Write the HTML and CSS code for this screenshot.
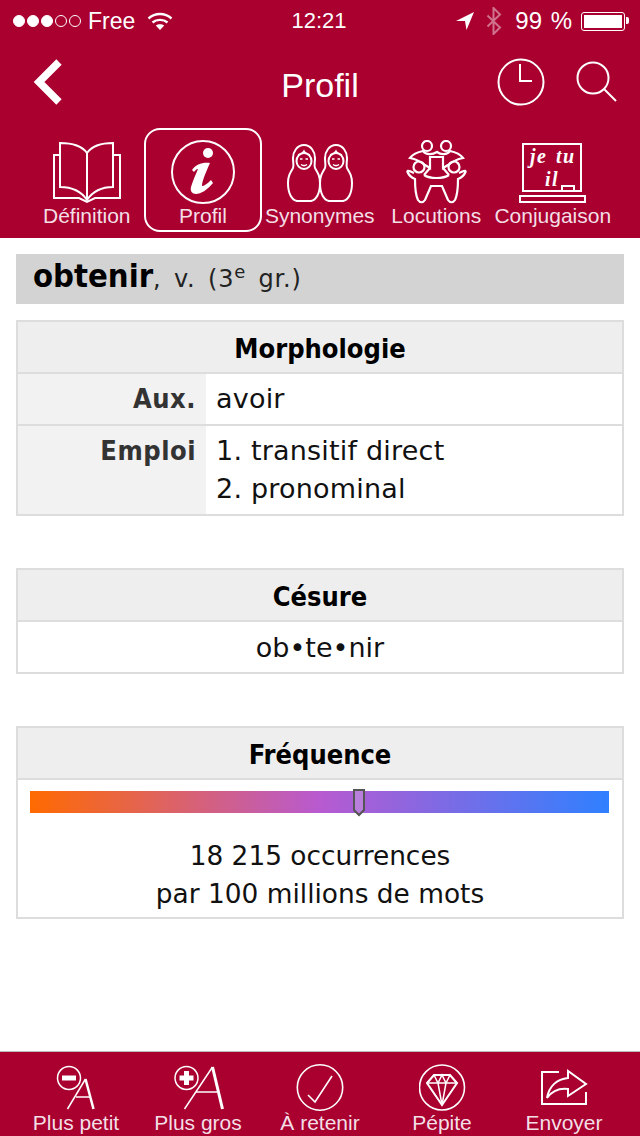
FILE: index.html
```html
<!DOCTYPE html>
<html lang="fr">
<head>
    <meta charset="UTF-8">
    <meta name="viewport" content="width=device-width, initial-scale=1.0">
    <title>Profil</title>
    <link rel="stylesheet" href="styles.css">
</head>
<body>

    <div class="app">
        <header class="app-header">
            <div class="status-bar">
                <div class="status-left">
                    <span class="signal"><i class="on"></i><i class="on"></i><i class="on"></i><i></i><i></i></span>
                    <span class="carrier">Free</span>
                    <svg class="wifi" width="26" height="20" viewBox="0 0 26 20">
                        <path d="M1.500 7.500C8 1.500 18 1.500 24.500 7.500" fill="none" stroke="#fff" stroke-width="2.400"/>
                        <path d="M5.500 11.500C9.500 8 16.500 8 20.500 11.500" fill="none" stroke="#fff" stroke-width="2.400"/>
                        <path d="M13 19L8.800 14.500C11 12.800 15 12.800 17.200 14.500Z" fill="#fff"/>
                    </svg>
                </div>
                <div class="status-time">12:21</div>
                <div class="status-right">
                    <svg width="18" height="18" viewBox="0 0 18 18"><path d="M0 9L18 0L10.500 18L9 9Z" fill="#fff"/></svg>
                    <svg class="bluetooth" width="16" height="28" viewBox="0 0 16 28"><path d="M1.500 8.500L14 20.500L7.500 27V1L14 7.500L1.500 19.500" fill="none" stroke="#fff" stroke-width="2"/></svg>
                    <span class="battery-text">99 %</span>
                    <span class="battery"><span class="battery-fill"></span></span>
                </div>
            </div>

            <div class="nav-bar">
                <svg class="back" width="32" height="48" viewBox="0 0 32 48"><path d="M28 4L8 24L28 44" fill="none" stroke="#fff" stroke-width="7.500"/></svg>
                <h1>Profil</h1>
                <div class="nav-icons">
                    <svg width="48" height="48" viewBox="0 0 48 48" fill="none" stroke="#fff" stroke-width="2"><circle cx="24" cy="24" r="22.500"/><path d="M23 6V23H35"/></svg>
                    <svg width="42" height="42" viewBox="0 0 42 42" fill="none" stroke="#fff" stroke-width="2"><circle cx="17" cy="17" r="15.500"/><path d="M28 28L40 40"/></svg>
                </div>
            </div>

            <nav class="tabs">
                <a class="tab">
                    <svg width="68" height="64" viewBox="0 0 68 64" fill="none" stroke="#fff" stroke-width="2"><path d="M34 13C29 6 19 3 7 3V47C18 47 28 51 34 60C40 51 50 47 60 47V3C49 3 39 6 34 13Z"/><path d="M34 13V60"/><path d="M7 15H1V58H26L34 62L42 58H67V15H60"/></svg>
                    <span>Définition</span>
                </a>
                <a class="tab active">
                    <svg width="64" height="64" viewBox="0 0 64 64"><circle cx="32" cy="32" r="31" fill="none" stroke="#fff" stroke-width="2"/><circle cx="37" cy="13" r="5" fill="#fff"/><path d="M21 30C25 24 32 22 39 23C35 32 31 41 31 46C33 46 36 44 40 40L42 43C36 50 30 54 25 54C21 54 19 51 20 47C22 40 25 34 27 29C25 29 24 31 23 32Z" fill="#fff"/></svg>
                    <span>Profil</span>
                </a>
                <a class="tab">
                    <svg width="66" height="64" viewBox="0 0 66 64" fill="none" stroke="#fff" stroke-width="2">
                        <g transform="translate(0 4)">
                            <path d="M17 1C24 1 28 8 28 14C28 19 27 21 28 24C31 29 33 32 33 39C33 50 29 56 24 57H10C5 56 1 50 1 39C1 32 3 29 6 24C7 21 6 19 6 14C6 8 10 1 17 1Z"/>
                            <ellipse cx="17" cy="17" rx="7.500" ry="8"/>
                            <path d="M13 15H15.500M18.500 15H21M14 20.500C16 22 18 22 20 20.500M11 11C14 10 16 9 17 7C18 9 20 10 23 11" stroke-width="1.500"/>
                        </g>
                        <g transform="translate(32 4)">
                            <path d="M17 1C24 1 28 8 28 14C28 19 27 21 28 24C31 29 33 32 33 39C33 50 29 56 24 57H10C5 56 1 50 1 39C1 32 3 29 6 24C7 21 6 19 6 14C6 8 10 1 17 1Z"/>
                            <ellipse cx="17" cy="17" rx="7.500" ry="8"/>
                            <path d="M13 15H15.500M18.500 15H21M14 20.500C16 22 18 22 20 20.500M11 11C14 10 16 9 17 7C18 9 20 10 23 11" stroke-width="1.500"/>
                        </g>
                    </svg>
                    <span>Synonymes</span>
                </a>
                <a class="tab">
                    <svg width="61" height="64" viewBox="0 0 61 64" fill="none" stroke="#fff" stroke-width="2.200">
                        <circle cx="21" cy="6" r="5"/>
                        <circle cx="40" cy="6" r="5"/>
                        <path d="M17 11C12 12 7 14 4 18C9 19 14 21 19 25L24 28V17H37V28L42 25C47 21 52 19 57 18C54 14 49 12 44 11C41 15 35 15 31 12C26 15 20 15 17 11Z"/>
                        <circle cx="13" cy="27" r="5.500"/>
                        <circle cx="48" cy="27" r="5.500"/>
                        <path d="M1 31C3 36 6 38 9 39C9 46 9 54 12 60C14 63 17 63 19 60L25 46H36L42 60C44 63 47 63 49 60C52 54 52 46 52 39C55 38 58 36 60 31"/>
                        <path d="M18 35C24 39 37 39 43 35M24 28L18 35M37 28L43 35"/>
                        <path d="M1 31C3 30 5 32 8 33M60 31C58 30 56 32 53 33"/>
                    </svg>
                    <span>Locutions</span>
                </a>
                <a class="tab">
                    <svg width="69" height="64" viewBox="0 0 69 64">
                        <rect x="5" y="4" width="58" height="47" fill="none" stroke="#fff" stroke-width="2"/>
                        <rect x="2" y="56" width="65" height="6" fill="none" stroke="#fff" stroke-width="2"/>
                        <path d="M44 51V46H56V51" fill="none" stroke="#fff" stroke-width="2"/>
                        <text x="12" y="23" class="chalk">je tu</text>
                        <text x="27" y="46" class="chalk">il</text>
                    </svg>
                    <span>Conjugaison</span>
                </a>
            </nav>
        </header>

        <main class="content">
            <div class="word-title"><b>obtenir</b><span class="word-info">, v. (3<sup>e</sup> gr.)</span></div>

            <section class="card">
                <h2>Morphologie</h2>
                <div class="row">
                    <div class="row-label">Aux.</div>
                    <div class="row-value">avoir</div>
                </div>
                <div class="row">
                    <div class="row-label">Emploi</div>
                    <div class="row-value">1. transitif direct<br>2. pronominal</div>
                </div>
            </section>

            <section class="card">
                <h2>Césure</h2>
                <div class="card-center">ob•te•nir</div>
            </section>

            <section class="card">
                <h2>Fréquence</h2>
                <div class="freq-wrap">
                    <div class="freq-bar">
                        <svg class="freq-marker" style="left: 56.200%" width="14" height="28" viewBox="0 0 14 28"><path d="M2 1H12V21L7 26L2 21Z" fill="#b97fdc" stroke="#555" stroke-width="2"/></svg>
                    </div>
                </div>
                <div class="freq-text">18 215 occurrences<br>par 100 millions de mots</div>
            </section>
        </main>

        <footer class="toolbar">
            <a class="tool">
                <svg width="40" height="47" viewBox="0 0 40 47" fill="none" stroke="#fff"><circle cx="13" cy="14" r="11.500" stroke-width="1.500"/><path d="M6 14H20" stroke-width="5"/><path d="M11.500 45L29.500 15" stroke-width="1.500"/><path d="M29.500 15L37.500 45" stroke-width="2.500"/><path d="M20 33H35" stroke-width="1.500"/></svg>
                <span>Plus petit</span>
            </a>
            <a class="tool">
                <svg width="52" height="47" viewBox="0 0 52 47" fill="none" stroke="#fff"><circle cx="14.500" cy="14" r="11.500" stroke-width="1.500"/><path d="M7.500 14H21.500M14.500 7V21" stroke-width="5"/><path d="M12.500 45L40.500 3" stroke-width="1.500"/><path d="M40.500 3L50.500 45" stroke-width="3"/><path d="M24 28H46" stroke-width="1.500"/></svg>
                <span>Plus gros</span>
            </a>
            <a class="tool">
                <svg width="48" height="47" viewBox="0 0 48 47" fill="none" stroke="#fff" stroke-width="1.600"><circle cx="24" cy="23.500" r="22.700"/><path d="M12 31L19 38L36 12"/></svg>
                <span>À retenir</span>
            </a>
            <a class="tool">
                <svg width="47" height="47" viewBox="0 0 47 47" fill="none" stroke="#fff" stroke-width="1.600"><circle cx="23" cy="23.500" r="22.500"/><path d="M15 11H31L38 19L23 41L8 19Z" stroke-width="2"/><path d="M8 19L15 11L19 19L23 11L27 19L31 11L38 19M8 19H38M19 19L23 41L27 19" stroke-width="1.500"/></svg>
                <span>Pépite</span>
            </a>
            <a class="tool">
                <svg width="47" height="47" viewBox="0 0 47 47" fill="none" stroke="#fff" stroke-width="2"><g transform="translate(0 6)"><path d="M18 2H1V34H45V22"/><path d="M6 28C8 16 16 9 27 8V1L45 14L27 26V19C18 18 11 21 6 28Z"/></g></svg>
                <span>Envoyer</span>
            </a>
        </footer>
    </div>

</body>
</html>
```

FILE: styles.css
```css
body {
    font-family: "DejaVu Sans", Verdana, sans-serif;
    background-color: #fff;
    margin: 0;
    padding: 0;
}

.app {
    width: 640px;
    height: 1136px;
    display: flex;
    flex-direction: column;
    overflow: hidden;
}

.app-header {
    background-color: #a90030;
    color: #fff;
    height: 238px;
    font-family: "Liberation Sans", Arial, sans-serif;
}

.status-bar {
    height: 40px;
    padding: 2px 15px 0 13px;
    box-sizing: border-box;
    display: grid;
    grid-template-columns: 1fr auto 1fr;
    align-items: center;
    font-size: 22px;
}

.status-left,
.status-right {
    display: flex;
    align-items: center;
}

.status-right {
    justify-content: flex-end;
    gap: 12px;
}

.signal {
    display: flex;
    gap: 2px;
    margin-right: 7px;
}

.signal i {
    width: 12px;
    height: 12px;
    border: 1px solid #fff;
    border-radius: 50%;
    box-sizing: border-box;
}

.signal i.on {
    background-color: #fff;
}

.carrier {
    font-size: 23px;
}

.wifi {
    margin-left: 12px;
}

.bluetooth {
    opacity: 0.45;
    margin-right: 1px;
}

.battery-text {
    font-size: 24px;
    word-spacing: 2px;
}

.battery {
    width: 44px;
    height: 19px;
    margin-left: -3px;
    padding: 2px;
    box-sizing: border-box;
    border: 1px solid #fff;
    border-radius: 3px;
    position: relative;
    display: block;
}

.battery::after {
    content: "";
    position: absolute;
    right: -5px;
    top: 4px;
    width: 3px;
    height: 7px;
    background-color: #fff;
    border-radius: 0 2px 2px 0;
}

.battery-fill {
    display: block;
    height: 100%;
    background-color: #fff;
}

.nav-bar {
    height: 88px;
    padding: 0 22px 4px 31px;
    box-sizing: border-box;
    display: flex;
    align-items: center;
    justify-content: space-between;
    position: relative;
}

.nav-bar h1 {
    position: absolute;
    left: 0;
    right: 0;
    margin: 6px 0 0;
    text-align: center;
    font-size: 34px;
    font-weight: normal;
    pointer-events: none;
}

.nav-icons {
    display: flex;
    align-items: center;
    gap: 31px;
}

.tabs {
    display: flex;
    padding-left: 28.500px;
}

.tab {
    width: 116.500px;
    height: 104px;
    flex-shrink: 0;
    box-sizing: border-box;
    display: flex;
    flex-direction: column;
    align-items: center;
    justify-content: flex-end;
    padding-bottom: 2px;
    border: 2px solid transparent;
    border-radius: 16px;
    font-size: 21px;
    white-space: nowrap;
    color: #f3dfe5;
}

.tab.active {
    width: 118px;
    margin: 0 -0.500px 0 -1px;
    border-color: #fff;
}

.chalk {
    font-family: "Liberation Serif", serif;
    font-style: italic;
    font-weight: bold;
    font-size: 20px;
    letter-spacing: 1.500px;
    word-spacing: 2px;
    fill: #fff;
}

.content {
    flex: 1;
    padding: 16px 16px 0;
}

.word-title {
    height: 50px;
    line-height: 44px;
    padding-left: 17px;
    margin-bottom: 16px;
    background-color: #d3d3d3;
    font-size: 24px;
    color: #222;
}

.word-title b {
    font-family: "DejaVu Sans Condensed", "DejaVu Sans", sans-serif;
    font-size: 32.500px;
    color: #000;
}

.word-info {
    letter-spacing: 0.800px;
    word-spacing: 4px;
}

.word-title sup {
    font-size: 18px;
    line-height: 0;
}

.card {
    border: 2px solid #ddd;
    margin-bottom: 52px;
    font-size: 27px;
    color: #111;
}

.card h2,
.row-label {
    font-family: "DejaVu Sans Condensed", "DejaVu Sans", sans-serif;
}

.card h2 {
    margin: 0;
    height: 50px;
    line-height: 54px;
    text-align: center;
    font-size: 27px;
    background-color: #eee;
    color: #000;
}

.row {
    display: flex;
    border-top: 2px solid #ddd;
}

.row-label {
    width: 188px;
    box-sizing: border-box;
    padding: 6px 10px 0 0;
    text-align: right;
    font-weight: bold;
    line-height: 38px;
    letter-spacing: 0.500px;
    background-color: #f2f2f2;
    color: #333;
}

.row-value {
    padding: 6px 10px;
    line-height: 38px;
    letter-spacing: 0.200px;
}

.card-center {
    border-top: 2px solid #ddd;
    text-align: center;
    height: 50px;
    line-height: 52px;
}

.freq-wrap {
    border-top: 2px solid #ddd;
    padding: 11px 13px 0 12px;
}

.freq-bar {
    height: 22px;
    position: relative;
    background: linear-gradient(to right, #ff6a00 0%, #b85ad0 50%, #2f80ff 100%);
}

.freq-marker {
    position: absolute;
    top: -2px;
    margin-left: -3px;
}

.freq-text {
    text-align: center;
    font-size: 26.400px;
    line-height: 38px;
    padding: 24px 0 4px;
}

.toolbar {
    height: 85px;
    box-sizing: border-box;
    border-top: 1px solid #bbb;
    background-color: #a90030;
    color: #f3dfe5;
    font-family: "Liberation Sans", Arial, sans-serif;
    font-size: 21px;
    display: flex;
    padding: 0 15px;
}

.tool {
    flex: 1;
    display: flex;
    flex-direction: column;
    align-items: center;
    justify-content: flex-end;
    padding-bottom: 1px;
    white-space: nowrap;
}
```
